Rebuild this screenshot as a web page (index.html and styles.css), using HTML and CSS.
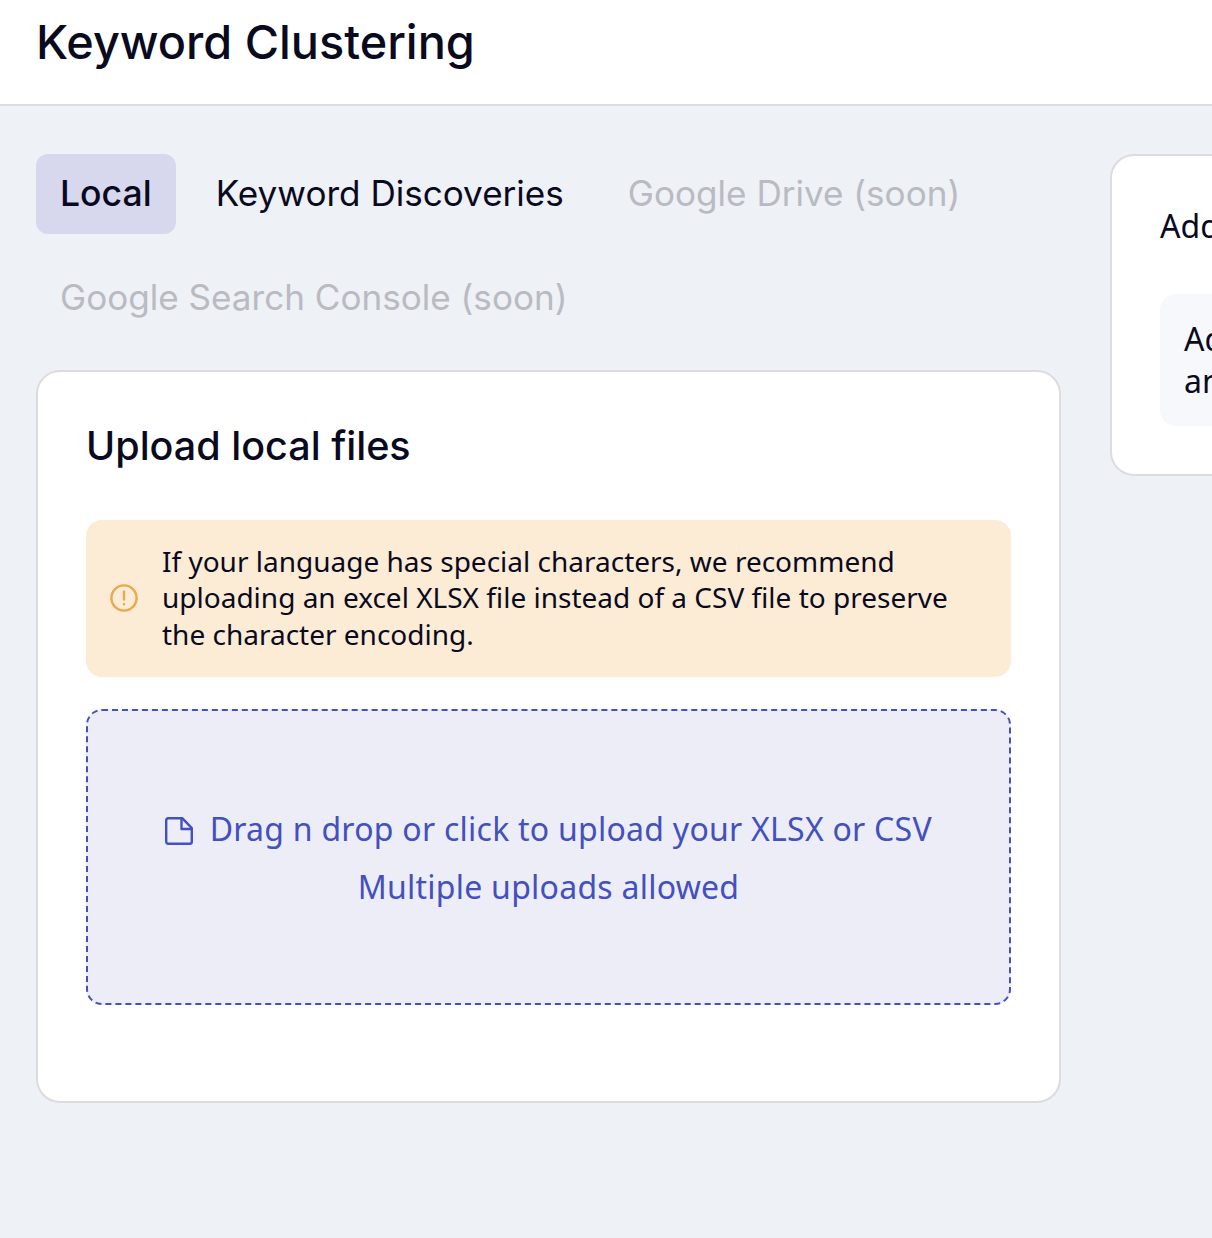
FILE: index.html
```html
<!DOCTYPE html>
<html lang="en">
<head>
    <meta charset="UTF-8">
    <title>Keyword Clustering</title>
    <link rel="stylesheet" href="styles.css">
</head>
<body>
    <header class="topbar">
        <h1>Keyword Clustering</h1>
    </header>

    <main class="layout">
        <section class="left-col">
            <nav class="tabs">
                <span class="tab active">Local</span>
                <span class="tab">Keyword Discoveries</span>
                <span class="tab disabled">Google Drive (soon)</span>
                <span class="tab disabled">Google Search Console (soon)</span>
            </nav>

            <div class="card upload-card">
                <h2>Upload local files</h2>

                <div class="alert">
                    <svg class="alert-icon" viewBox="0 0 28 28" fill="none" stroke="currentColor" stroke-width="2.4" stroke-linecap="round">
                        <circle cx="14" cy="14" r="12.6"/>
                        <path d="M14 7.5v8"/>
                        <path d="M14 20v.2"/>
                    </svg>
                    <p>If your language has special characters, we recommend uploading an excel XLSX file instead of a CSV file to preserve the character encoding.</p>
                </div>

                <div class="dropzone">
                    <p class="drop-line">
                        <svg class="file-icon" viewBox="0 0 28 28" fill="none" stroke="currentColor" stroke-width="2.400" stroke-linejoin="round">
                            <path d="M1.200 3.200a2 2 0 0 1 2-2h14l9.600 10v13.600a2 2 0 0 1-2 2H3.200a2 2 0 0 1-2-2z"/>
                            <path d="M16.500 1.200v10.800h10.300"/>
                        </svg>
                        Drag n drop or click to upload your XLSX or CSV
                    </p>
                    <p>Multiple uploads allowed</p>
                </div>
            </div>
        </section>

        <aside class="card side-card">
            <h3>Add your keywords</h3>
            <div class="side-note">
                <p>Add a list of keywords<br>and start clustering</p>
            </div>
        </aside>
    </main>
</body>
</html>
```

FILE: styles.css
```css
:root {
    --ink: #0a0a1e;
    --page: #eef1f6;
    --line: #dcdce0;
    --indigo: #4350bd;
}

* {
    box-sizing: border-box;
    margin: 0;
    padding: 0;
}

html, body {
    height: 100%;
    overflow: hidden;
}

body {
    background-color: var(--page);
    color: var(--ink);
    font-family: 'Noto Sans', Roboto, sans-serif;
}

.topbar {
    height: 106px;
    padding: 12px 36px 0;
    background: white;
    border-bottom: 2px solid var(--line);
}

.topbar h1 {
    font-family: Inter, 'Open Sans', sans-serif;
    font-size: 46.8px;
    font-weight: 500;
    line-height: 60px;
}

.layout {
    display: flex;
    align-items: flex-start;
    gap: 49px;
    padding: 48px 36px;
    width: 1700px;
}

.left-col {
    width: 1025px;
    flex-shrink: 0;
}

.tabs {
    display: flex;
    flex-wrap: wrap;
    gap: 24px 0;
    margin-bottom: 32px;
}

.tab {
    height: 80px;
    padding: 0 24px;
    margin-right: 16px;
    border-radius: 12px;
    font-family: Inter, 'Open Sans', sans-serif;
    font-size: 35.1px;
    line-height: 79px;
}

.tab.active {
    background-color: #d7d8ed;
    font-size: 35.6px;
    font-weight: 500;
}

.tab.disabled {
    color: #b9bac2;
}

.card {
    background: white;
    border: 2px solid var(--line);
    border-radius: 24px;
}

.upload-card {
    height: 733px;
    padding: 48px;
}

.upload-card h2 {
    font-family: Inter, 'Open Sans', sans-serif;
    font-size: 39.5px;
    font-weight: 500;
    line-height: 52px;
    margin-bottom: 48px;
}

.alert {
    display: flex;
    align-items: center;
    gap: 24px;
    height: 157px;
    padding: 0 48px 2px 24px;
    background-color: #fcecd6;
    border-radius: 16px;
    font-size: 28px;
    line-height: 36.500px;
}

.alert-icon {
    width: 28px;
    height: 28px;
    flex-shrink: 0;
    color: #e8a950;
}

.dropzone {
    height: 296px;
    margin-top: 32px;
    padding-top: 89px;
    background-color: #ecedf7;
    border: 2px dashed var(--indigo);
    border-radius: 16px;
    color: var(--indigo);
    font-size: 32px;
    line-height: 58px;
    letter-spacing: 0.25px;
    text-align: center;
}

.file-icon {
    width: 28px;
    height: 28px;
    margin-right: 8px;
    vertical-align: -4px;
}

.side-card {
    width: 560px;
    height: 322px;
    padding: 48px;
    flex-shrink: 0;
}

.side-card h3 {
    font-size: 32px;
    font-weight: 400;
    line-height: 44px;
    margin-bottom: 46px;
}

.side-note {
    height: 132px;
    padding: 24px;
    background-color: #f7f8fb;
    border-radius: 16px;
    font-size: 32px;
    line-height: 42px;
}
```
